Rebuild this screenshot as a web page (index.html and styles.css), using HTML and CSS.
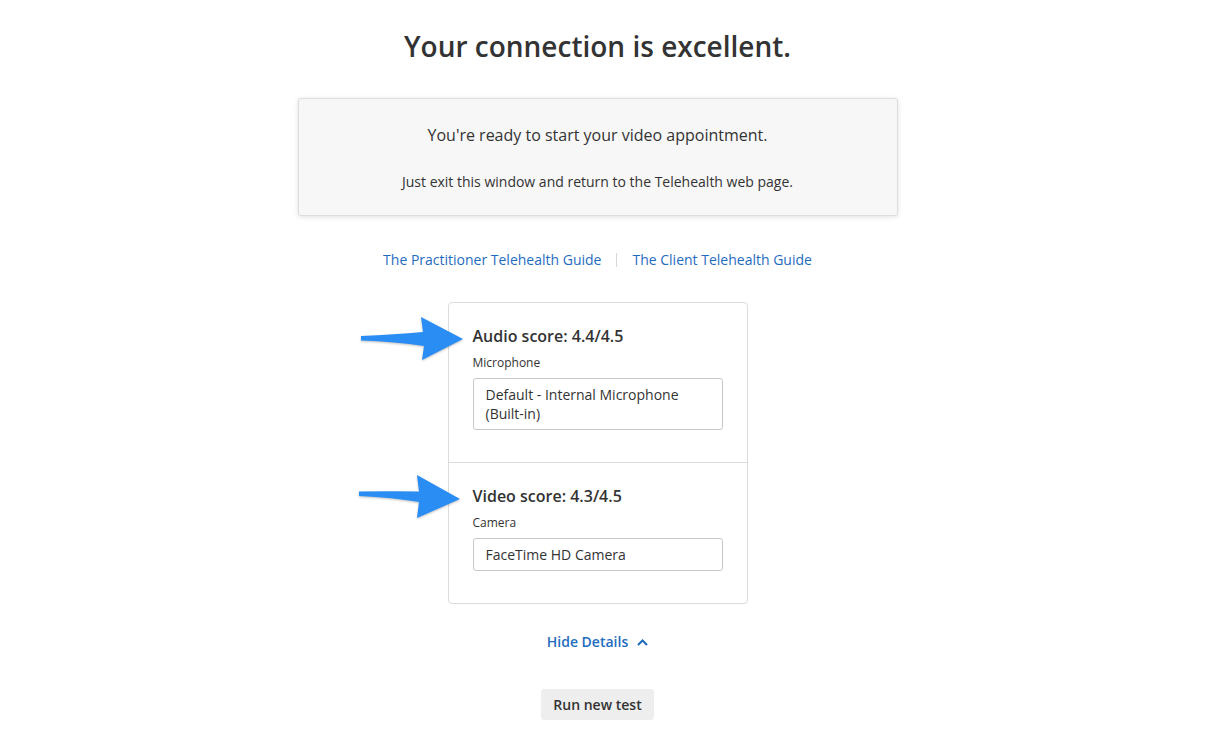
FILE: index.html
```html
<!DOCTYPE html>
<html lang="en">
	<head>
		<meta charset="UTF-8">
		<title>Connection test</title>
		<link rel="stylesheet" href="styles.css">
	</head>
	<body>
		<div class="page">
			<h1 class="title">Your connection is excellent.</h1>

			<div class="notice">
				<p class="notice-lead">You're ready to start your video appointment.</p>
				<p class="notice-sub">Just exit this window and return to the Telehealth web page.</p>
			</div>

			<div class="guides">
				<a href="#">The Practitioner Telehealth Guide</a>
				<span class="sep"></span>
				<a href="#">The Client Telehealth Guide</a>
			</div>

			<div class="details">
				<div class="section">
					<svg class="arrow" width="106" height="46" viewBox="0 0 106 46">
						<path d="M2,21 Q36,19.5 64,17 L62,2 L104,24 L63,45 L65,31 Q36,26.5 2,25.5 Z"/>
					</svg>
					<div class="score">Audio score: 4.4/4.5</div>
					<div class="label">Microphone</div>
					<div class="field">Default - Internal Microphone (Built-in)</div>
				</div>
				<div class="section">
					<svg class="arrow arrow-two" width="106" height="46" viewBox="0 0 106 46">
						<path d="M2,18.5 Q36,18 62,18.5 L60,2 L103,26 L60,45 L62,29 Q36,24.5 2,23 Z"/>
					</svg>
					<div class="score">Video score: 4.3/4.5</div>
					<div class="label">Camera</div>
					<div class="field">FaceTime HD Camera</div>
				</div>
			</div>

			<a href="#" class="toggle">Hide Details
				<svg width="11" height="7" viewBox="0 0 11 7"><path d="M1,6 L5.5,1.5 L10,6" /></svg>
			</a>

			<button class="run">Run new test</button>
		</div>
	</body>
</html>
```

FILE: styles.css
```css
body{
	margin:0;
	padding:0;
	background:#fff;
	color:#333;
	font-family:"Open Sans", "Noto Sans", sans-serif;
}

.page{
	display:flex;
	flex-direction:column;
	align-items:center;
	padding-right:30px;
}

.title{
	margin:29px 0 0;
	font-size:28px;
	font-weight:600;
	line-height:34px;
	color:#333;
}

.notice{
	box-sizing:border-box;
	width:600px;
	margin-top:35px;
	padding:24px 20px 23px;
	background:#f7f7f7;
	border:1px solid #dedede;
	border-radius:3px;
	box-shadow:0 1px 5px rgba(0,0,0,0.12);
	text-align:center;
}
.notice p{
	margin:0;
}
.notice-lead{
	font-size:16px;
	line-height:24px;
}
.notice-sub{
	margin-top:25px !important;
	font-size:14px;
	line-height:20px;
}

.guides{
	display:flex;
	align-items:center;
	margin-top:34px;
	font-size:14px;
	line-height:20px;
}
.guides a{
	color:#1f6cbf;
	text-decoration:none;
}
.sep{
	display:inline-block;
	width:1px;
	height:14px;
	margin:0 15px;
	background:#d8d8d8;
}

.details{
	box-sizing:border-box;
	width:300px;
	margin-top:32px;
	border:1px solid #dcdcdc;
	border-radius:4px;
}
.section{
	position:relative;
	padding:21px 24px 32px;
}
.section+.section{
	border-top:1px solid #dcdcdc;
}
.score{
	font-size:16px;
	font-weight:600;
	line-height:24px;
}
.label{
	margin-top:6px;
	font-size:12px;
	line-height:18px;
}
.field{
	box-sizing:border-box;
	margin-top:6px;
	padding:6px 12px;
	border:1px solid #c8c8c8;
	border-radius:3px;
	font-size:14px;
	line-height:19px;
}

.arrow{
	position:absolute;
	left:-90px;
	top:12px;
	fill:#2a8df4;
	filter:drop-shadow(0 1px 1px rgba(0,0,0,0.25));
}
.arrow-two{
	left:-92px;
	top:10px;
}

.toggle{
	display:flex;
	align-items:center;
	gap:9px;
	margin-top:28px;
	font-size:14px;
	font-weight:600;
	line-height:20px;
	color:#1f6cbf;
	text-decoration:none;
}
.toggle svg{
	fill:none;
	stroke:#1f6cbf;
	stroke-width:2;
}

.run{
	margin-top:37px;
	padding:0 12px;
	height:31px;
	background:#eeeeee;
	border:none;
	border-radius:3px;
	font-family:"Open Sans", "Noto Sans", sans-serif;
	font-size:14px;
	font-weight:600;
	color:#333;
}
```
